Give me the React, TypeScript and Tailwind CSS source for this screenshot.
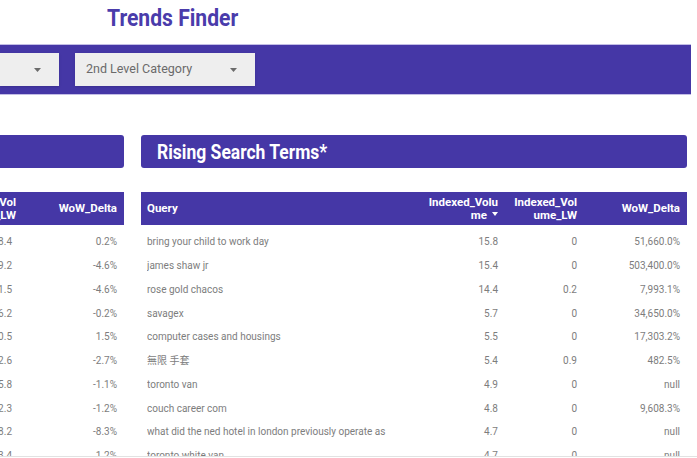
import React from "react";

const PURPLE = "bg-[#4537a6]";

const rising = [
  { q: "bring your child to work day", v: "15.8", lw: "0", d: "51,660.0%" },
  { q: "james shaw jr", v: "15.4", lw: "0", d: "503,400.0%" },
  { q: "rose gold chacos", v: "14.4", lw: "0.2", d: "7,993.1%" },
  { q: "savagex", v: "5.7", lw: "0", d: "34,650.0%" },
  { q: "computer cases and housings", v: "5.5", lw: "0", d: "17,303.2%" },
  { q: "無限 手套", v: "5.4", lw: "0.9", d: "482.5%" },
  { q: "toronto van", v: "4.9", lw: "0", d: "null" },
  { q: "couch career com", v: "4.8", lw: "0", d: "9,608.3%" },
  { q: "what did the ned hotel in london previously operate as", v: "4.7", lw: "0", d: "null" },
  { q: "toronto white van", v: "4.7", lw: "0", d: "null" },
];

const leftRows = [
  { lw: "38.4", d: "0.2%" },
  { lw: "39.2", d: "-4.6%" },
  { lw: "31.5", d: "-4.6%" },
  { lw: "36.2", d: "-0.2%" },
  { lw: "30.5", d: "1.5%" },
  { lw: "32.6", d: "-2.7%" },
  { lw: "35.8", d: "-1.1%" },
  { lw: "32.3", d: "-1.2%" },
  { lw: "38.2", d: "-8.3%" },
  { lw: "33.4", d: "1.2%" },
];

function Caret() {
  return (
    <svg width="7" height="4" viewBox="0 0 7 4" className="shrink-0">
      <path d="M0 0 L7 0 L3.5 4 Z" fill="#6b6b6b" />
    </svg>
  );
}

function SortArrow() {
  return (
    <svg width="6" height="4" viewBox="0 0 6 4" className="inline-block ml-[5px] mb-[2px]">
      <path d="M0 0 L6 0 L3 4 Z" fill="#ffffff" />
    </svg>
  );
}

export default function App() {
  return (
    <div
      className="w-[697px] h-[458px] bg-white overflow-hidden relative"
      style={{ fontFamily: "Roboto, 'Noto Sans CJK TC', 'Noto Sans', sans-serif" }}
    >
      {/* title */}
      <div className="h-[45px] pt-[4px]">
        <div className="ml-[107px] inline-block origin-left scale-x-[0.88] text-[24px] leading-[28px] font-bold text-[#4a3cab]">
          Trends Finder
        </div>
      </div>

      {/* filter bar */}
      <div
        className={`w-[691px] h-[49px] ${PURPLE} flex items-center shadow-[0_1px_0_#c2bde5,0_-1px_0_#c2bde5]`}
      >
        <div className="w-[59px] h-[33px] bg-[#eeeeee] flex items-center justify-end pr-[18px] shadow-sm">
          <Caret />
        </div>
        <div className="ml-[16px] w-[180px] h-[33px] bg-[#eeeeee] flex items-center justify-between pl-[11px] pr-[18px] shadow-sm">
          <span className="text-[12.5px] text-[#6a6a6a]">2nd Level Category</span>
          <Caret />
        </div>
      </div>

      <div className="mt-[41px] flex gap-[17px]">
        {/* left panel (scrolled off) */}
        <div className="w-[124px] overflow-hidden">
          <div className={`h-[33px] ${PURPLE} rounded-r-[3px]`} />
          <div className="mt-[24px] -ml-[80px] w-[204px]">
            <div className={`h-[33px] ${PURPLE} flex items-center text-white text-[11.5px] font-bold leading-[13px]`}>
              <div className="w-[96px] text-right">
                Indexed_Vol
                <br />
                ume_LW
              </div>
              <div className="flex-1 text-right pr-[7px]">WoW_Delta</div>
            </div>
            <div className="pt-[5px] h-[231px] overflow-hidden">
              {leftRows.map((r, i) => (
                <div key={i} className="h-[23.75px] flex items-center text-[10px] text-[#7d7d7d]">
                  <div className="w-[92px] text-right">{r.lw}</div>
                  <div className="flex-1 text-right pr-[7px]">{r.d}</div>
                </div>
              ))}
            </div>
          </div>
        </div>

        {/* right panel */}
        <div className="w-[546px]">
          <div className={`h-[33px] ${PURPLE} rounded-[3px] flex items-center pl-[16px]`}>
            <span className="inline-block origin-left scale-x-[0.875] text-[20px] leading-[24px] font-bold text-white mt-[1px]">
              Rising Search Terms*
            </span>
          </div>
          <div
            className={`mt-[24px] h-[33px] ${PURPLE} grid grid-cols-[1fr_77px_79px_103px] items-center pl-[6px] pr-[7px] text-white text-[11.5px] font-bold leading-[13px]`}
          >
            <div>Query</div>
            <div className="text-right">
              Indexed_Volu
              <br />
              me
              <SortArrow />
            </div>
            <div className="text-right">
              Indexed_Vol
              <br />
              ume_LW
            </div>
            <div className="text-right">WoW_Delta</div>
          </div>
          <div className="pt-[5px] h-[231px] overflow-hidden">
            {rising.map((r, i) => (
              <div
                key={i}
                className="h-[23.75px] grid grid-cols-[1fr_77px_79px_103px] items-center pl-[6px] pr-[7px] text-[10px] text-[#7d7d7d]"
              >
                <div className="truncate">{r.q}</div>
                <div className="text-right">{r.v}</div>
                <div className="text-right">{r.lw}</div>
                <div className="text-right">{r.d}</div>
              </div>
            ))}
          </div>
        </div>
      </div>

      {/* bottom edge */}
      <div className="h-px bg-[#e2e2e2]" />
    </div>
  );
}
